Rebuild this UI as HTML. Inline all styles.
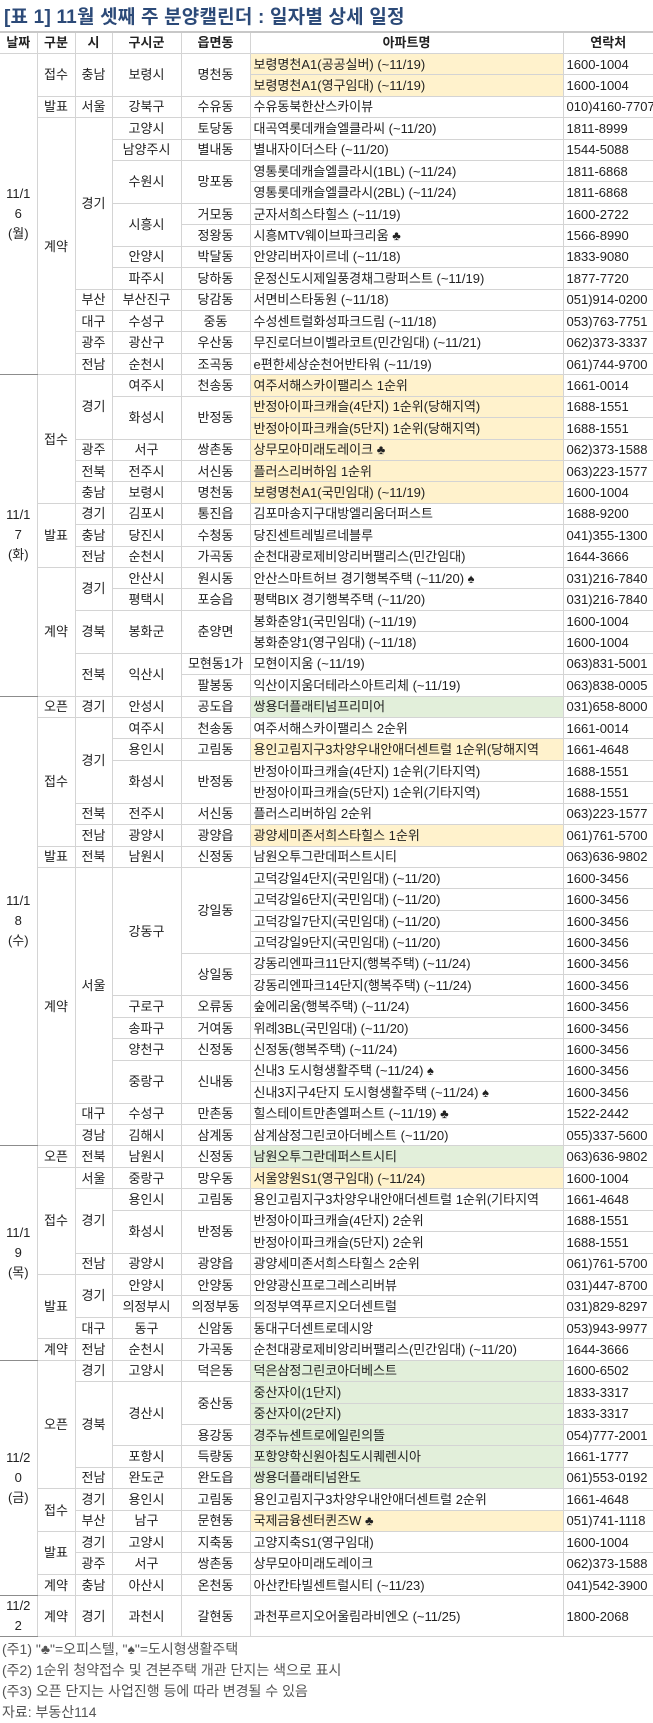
<!DOCTYPE html>
<html><head><meta charset="utf-8">
<style>
*{margin:0;padding:0;box-sizing:border-box}
body{width:653px;height:1719px;background:#fff;font-family:"Liberation Sans","Noto Sans CJK KR",sans-serif;color:#222;overflow:hidden}
h1{height:31px;font-size:19px;font-weight:bold;color:#2c4a78;padding:2px 0 0 4px;white-space:nowrap;letter-spacing:0.2px}
table{border-collapse:collapse;table-layout:fixed;width:653px;font-size:13px}
td,th{border:1px solid #d4d4d4;text-align:center;vertical-align:middle;white-space:nowrap;overflow:hidden;line-height:15px;padding:0}
th{font-weight:bold;height:21px;border-top:2px solid #c8c8c8}
tr{height:21.43px}
td.a{text-align:left;padding-left:3px}
td.p{text-align:left;padding-left:3px}
.y{background:#fff2cc}
.g{background:#e2efda}
tr.d td{border-top:1px solid #8c8c8c}
td.dt{line-height:20px;border-bottom:1px solid #8c8c8c}
td:first-child{border-left:none}
td:last-child,th:last-child{border-right:none}
th:first-child{border-left:none}
.n{font-size:14px;color:#555;line-height:21px;padding-left:2px;margin-top:2px}
</style></head><body>
<h1>[표 1] 11월 셋째 주 분양캘린더 : 일자별 상세 일정</h1>
<table>
<colgroup><col style="width:37px"><col style="width:38px"><col style="width:37px"><col style="width:69px"><col style="width:69px"><col style="width:313px"><col style="width:90px"></colgroup>
<tr><th>날짜</th><th>구분</th><th>시</th><th>구시군</th><th>읍면동</th><th>아파트명</th><th>연락처</th></tr>

<tr class="d"><td rowspan="15" class="dt">11/1<br>6<br>(월)</td><td rowspan="2">접수</td><td rowspan="2">충남</td><td rowspan="2">보령시</td><td rowspan="2">명천동</td><td class="a y">보령명천A1(공공실버) (~11/19)</td><td class="p">1600-1004</td></tr>
<tr><td class="a y">보령명천A1(영구임대) (~11/19)</td><td class="p">1600-1004</td></tr>
<tr><td>발표</td><td>서울</td><td>강북구</td><td>수유동</td><td class="a">수유동북한산스카이뷰</td><td class="p">010)4160-7707</td></tr>
<tr><td rowspan="12">계약</td><td rowspan="8">경기</td><td>고양시</td><td>토당동</td><td class="a">대곡역롯데캐슬엘클라씨 (~11/20)</td><td class="p">1811-8999</td></tr>
<tr><td>남양주시</td><td>별내동</td><td class="a">별내자이더스타 (~11/20)</td><td class="p">1544-5088</td></tr>
<tr><td rowspan="2">수원시</td><td rowspan="2">망포동</td><td class="a">영통롯데캐슬엘클라시(1BL) (~11/24)</td><td class="p">1811-6868</td></tr>
<tr><td class="a">영통롯데캐슬엘클라시(2BL) (~11/24)</td><td class="p">1811-6868</td></tr>
<tr><td rowspan="2">시흥시</td><td>거모동</td><td class="a">군자서희스타힐스 (~11/19)</td><td class="p">1600-2722</td></tr>
<tr><td>정왕동</td><td class="a">시흥MTV웨이브파크리움 ♣</td><td class="p">1566-8990</td></tr>
<tr><td>안양시</td><td>박달동</td><td class="a">안양리버자이르네 (~11/18)</td><td class="p">1833-9080</td></tr>
<tr><td>파주시</td><td>당하동</td><td class="a">운정신도시제일풍경채그랑퍼스트 (~11/19)</td><td class="p">1877-7720</td></tr>
<tr><td>부산</td><td>부산진구</td><td>당감동</td><td class="a">서면비스타동원 (~11/18)</td><td class="p">051)914-0200</td></tr>
<tr><td>대구</td><td>수성구</td><td>중동</td><td class="a">수성센트럴화성파크드림 (~11/18)</td><td class="p">053)763-7751</td></tr>
<tr><td>광주</td><td>광산구</td><td>우산동</td><td class="a">무진로더브이벨라코트(민간임대) (~11/21)</td><td class="p">062)373-3337</td></tr>
<tr><td>전남</td><td>순천시</td><td>조곡동</td><td class="a">e편한세상순천어반타워 (~11/19)</td><td class="p">061)744-9700</td></tr>

<tr class="d"><td rowspan="15" class="dt">11/1<br>7<br>(화)</td><td rowspan="6">접수</td><td rowspan="3">경기</td><td>여주시</td><td>천송동</td><td class="a y">여주서해스카이팰리스 1순위</td><td class="p">1661-0014</td></tr>
<tr><td rowspan="2">화성시</td><td rowspan="2">반정동</td><td class="a y">반정아이파크캐슬(4단지) 1순위(당해지역)</td><td class="p">1688-1551</td></tr>
<tr><td class="a y">반정아이파크캐슬(5단지) 1순위(당해지역)</td><td class="p">1688-1551</td></tr>
<tr><td>광주</td><td>서구</td><td>쌍촌동</td><td class="a y">상무모아미래도레이크 ♣</td><td class="p">062)373-1588</td></tr>
<tr><td>전북</td><td>전주시</td><td>서신동</td><td class="a y">플러스리버하임 1순위</td><td class="p">063)223-1577</td></tr>
<tr><td>충남</td><td>보령시</td><td>명천동</td><td class="a y">보령명천A1(국민임대) (~11/19)</td><td class="p">1600-1004</td></tr>
<tr><td rowspan="3">발표</td><td>경기</td><td>김포시</td><td>통진읍</td><td class="a">김포마송지구대방엘리움더퍼스트</td><td class="p">1688-9200</td></tr>
<tr><td>충남</td><td>당진시</td><td>수청동</td><td class="a">당진센트레빌르네블루</td><td class="p">041)355-1300</td></tr>
<tr><td>전남</td><td>순천시</td><td>가곡동</td><td class="a">순천대광로제비앙리버팰리스(민간임대)</td><td class="p">1644-3666</td></tr>
<tr><td rowspan="6">계약</td><td rowspan="2">경기</td><td>안산시</td><td>원시동</td><td class="a">안산스마트허브 경기행복주택 (~11/20) ♠</td><td class="p">031)216-7840</td></tr>
<tr><td>평택시</td><td>포승읍</td><td class="a">평택BIX 경기행복주택 (~11/20)</td><td class="p">031)216-7840</td></tr>
<tr><td rowspan="2">경북</td><td rowspan="2">봉화군</td><td rowspan="2">춘양면</td><td class="a">봉화춘양1(국민임대) (~11/19)</td><td class="p">1600-1004</td></tr>
<tr><td class="a">봉화춘양1(영구임대) (~11/18)</td><td class="p">1600-1004</td></tr>
<tr><td rowspan="2">전북</td><td rowspan="2">익산시</td><td>모현동1가</td><td class="a">모현이지움 (~11/19)</td><td class="p">063)831-5001</td></tr>
<tr><td>팔봉동</td><td class="a">익산이지움더테라스아트리체 (~11/19)</td><td class="p">063)838-0005</td></tr>

<tr class="d"><td rowspan="21" class="dt">11/1<br>8<br>(수)</td><td>오픈</td><td>경기</td><td>안성시</td><td>공도읍</td><td class="a g">쌍용더플래티넘프리미어</td><td class="p">031)658-8000</td></tr>
<tr><td rowspan="6">접수</td><td rowspan="4">경기</td><td>여주시</td><td>천송동</td><td class="a">여주서해스카이팰리스 2순위</td><td class="p">1661-0014</td></tr>
<tr><td>용인시</td><td>고림동</td><td class="a y">용인고림지구3차양우내안애더센트럴 1순위(당해지역</td><td class="p">1661-4648</td></tr>
<tr><td rowspan="2">화성시</td><td rowspan="2">반정동</td><td class="a">반정아이파크캐슬(4단지) 1순위(기타지역)</td><td class="p">1688-1551</td></tr>
<tr><td class="a">반정아이파크캐슬(5단지) 1순위(기타지역)</td><td class="p">1688-1551</td></tr>
<tr><td>전북</td><td>전주시</td><td>서신동</td><td class="a">플러스리버하임 2순위</td><td class="p">063)223-1577</td></tr>
<tr><td>전남</td><td>광양시</td><td>광양읍</td><td class="a y">광양세미존서희스타힐스 1순위</td><td class="p">061)761-5700</td></tr>
<tr><td>발표</td><td>전북</td><td>남원시</td><td>신정동</td><td class="a">남원오투그란데퍼스트시티</td><td class="p">063)636-9802</td></tr>
<tr><td rowspan="13">계약</td><td rowspan="11">서울</td><td rowspan="6">강동구</td><td rowspan="4">강일동</td><td class="a">고덕강일4단지(국민임대) (~11/20)</td><td class="p">1600-3456</td></tr>
<tr><td class="a">고덕강일6단지(국민임대) (~11/20)</td><td class="p">1600-3456</td></tr>
<tr><td class="a">고덕강일7단지(국민임대) (~11/20)</td><td class="p">1600-3456</td></tr>
<tr><td class="a">고덕강일9단지(국민임대) (~11/20)</td><td class="p">1600-3456</td></tr>
<tr><td rowspan="2">상일동</td><td class="a">강동리엔파크11단지(행복주택) (~11/24)</td><td class="p">1600-3456</td></tr>
<tr><td class="a">강동리엔파크14단지(행복주택) (~11/24)</td><td class="p">1600-3456</td></tr>
<tr><td>구로구</td><td>오류동</td><td class="a">숲에리움(행복주택) (~11/24)</td><td class="p">1600-3456</td></tr>
<tr><td>송파구</td><td>거여동</td><td class="a">위례3BL(국민임대) (~11/20)</td><td class="p">1600-3456</td></tr>
<tr><td>양천구</td><td>신정동</td><td class="a">신정동(행복주택) (~11/24)</td><td class="p">1600-3456</td></tr>
<tr><td rowspan="2">중랑구</td><td rowspan="2">신내동</td><td class="a">신내3 도시형생활주택 (~11/24) ♠</td><td class="p">1600-3456</td></tr>
<tr><td class="a">신내3지구4단지 도시형생활주택 (~11/24) ♠</td><td class="p">1600-3456</td></tr>
<tr><td>대구</td><td>수성구</td><td>만촌동</td><td class="a">힐스테이트만촌엘퍼스트 (~11/19) ♣</td><td class="p">1522-2442</td></tr>
<tr><td>경남</td><td>김해시</td><td>삼계동</td><td class="a">삼계삼정그린코아더베스트 (~11/20)</td><td class="p">055)337-5600</td></tr>

<tr class="d"><td rowspan="10" class="dt">11/1<br>9<br>(목)</td><td>오픈</td><td>전북</td><td>남원시</td><td>신정동</td><td class="a g">남원오투그란데퍼스트시티</td><td class="p">063)636-9802</td></tr>
<tr><td rowspan="5">접수</td><td>서울</td><td>중랑구</td><td>망우동</td><td class="a y">서울양원S1(영구임대) (~11/24)</td><td class="p">1600-1004</td></tr>
<tr><td rowspan="3">경기</td><td>용인시</td><td>고림동</td><td class="a">용인고림지구3차양우내안애더센트럴 1순위(기타지역</td><td class="p">1661-4648</td></tr>
<tr><td rowspan="2">화성시</td><td rowspan="2">반정동</td><td class="a">반정아이파크캐슬(4단지) 2순위</td><td class="p">1688-1551</td></tr>
<tr><td class="a">반정아이파크캐슬(5단지) 2순위</td><td class="p">1688-1551</td></tr>
<tr><td>전남</td><td>광양시</td><td>광양읍</td><td class="a">광양세미존서희스타힐스 2순위</td><td class="p">061)761-5700</td></tr>
<tr><td rowspan="3">발표</td><td rowspan="2">경기</td><td>안양시</td><td>안양동</td><td class="a">안양광신프로그레스리버뷰</td><td class="p">031)447-8700</td></tr>
<tr><td>의정부시</td><td>의정부동</td><td class="a">의정부역푸르지오더센트럴</td><td class="p">031)829-8297</td></tr>
<tr><td>대구</td><td>동구</td><td>신암동</td><td class="a">동대구더센트로데시앙</td><td class="p">053)943-9977</td></tr>
<tr><td>계약</td><td>전남</td><td>순천시</td><td>가곡동</td><td class="a">순천대광로제비앙리버팰리스(민간임대) (~11/20)</td><td class="p">1644-3666</td></tr>

<tr class="d"><td rowspan="11" class="dt">11/2<br>0<br>(금)</td><td rowspan="6">오픈</td><td>경기</td><td>고양시</td><td>덕은동</td><td class="a g">덕은삼정그린코아더베스트</td><td class="p">1600-6502</td></tr>
<tr><td rowspan="4">경북</td><td rowspan="3">경산시</td><td rowspan="2">중산동</td><td class="a g">중산자이(1단지)</td><td class="p">1833-3317</td></tr>
<tr><td class="a g">중산자이(2단지)</td><td class="p">1833-3317</td></tr>
<tr><td>용강동</td><td class="a g">경주뉴센트로에일린의뜰</td><td class="p">054)777-2001</td></tr>
<tr><td>포항시</td><td>득량동</td><td class="a g">포항양학신원아침도시퀘렌시아</td><td class="p">1661-1777</td></tr>
<tr><td>전남</td><td>완도군</td><td>완도읍</td><td class="a g">쌍용더플래티넘완도</td><td class="p">061)553-0192</td></tr>
<tr><td rowspan="2">접수</td><td>경기</td><td>용인시</td><td>고림동</td><td class="a">용인고림지구3차양우내안애더센트럴 2순위</td><td class="p">1661-4648</td></tr>
<tr><td>부산</td><td>남구</td><td>문현동</td><td class="a y">국제금융센터퀸즈W ♣</td><td class="p">051)741-1118</td></tr>
<tr><td rowspan="2">발표</td><td>경기</td><td>고양시</td><td>지축동</td><td class="a">고양지축S1(영구임대)</td><td class="p">1600-1004</td></tr>
<tr><td>광주</td><td>서구</td><td>쌍촌동</td><td class="a">상무모아미래도레이크</td><td class="p">062)373-1588</td></tr>
<tr><td>계약</td><td>충남</td><td>아산시</td><td>온천동</td><td class="a">아산칸타빌센트럴시티 (~11/23)</td><td class="p">041)542-3900</td></tr>

<tr class="d" style="height:37px"><td class="dt">11/2<br>2</td><td>계약</td><td>경기</td><td>과천시</td><td>갈현동</td><td class="a">과천푸르지오어울림라비엔오 (~11/25)</td><td class="p">1800-2068</td></tr>
</table>
<div class="n">(주1) "♣"=오피스텔, "♠"=도시형생활주택<br>(주2) 1순위 청약접수 및 견본주택 개관 단지는 색으로 표시<br>(주3) 오픈 단지는 사업진행 등에 따라 변경될 수 있음<br>자료: 부동산114</div>
</body></html>
